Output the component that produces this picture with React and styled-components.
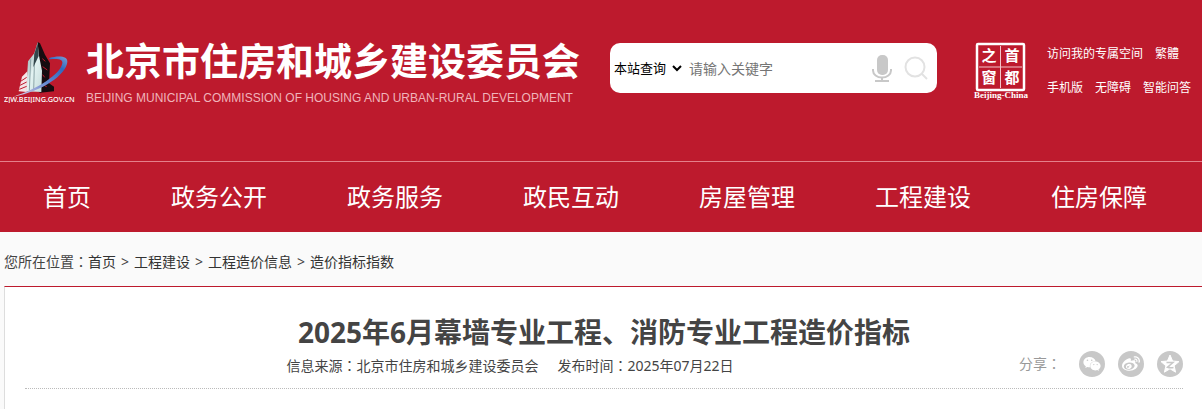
import React from "react";
import styled, { createGlobalStyle } from "styled-components";
import { FaWeibo, FaWeixin } from "react-icons/fa";

const navItems = ["首页", "政务公开", "政务服务", "政民互动", "房屋管理", "工程建设", "住房保障"];
const crumbs = ["首页", "工程建设", "工程造价信息", "造价指标指数"];
const quickLinks = [
  ["访问我的专属空间", "繁體"],
  ["手机版", "无障碍", "智能问答"],
];

const BuildingLogo = () => (
  <svg width="72" height="63" viewBox="12 18 216 189" aria-hidden="true">
    <defs>
      <linearGradient id="face" x1="0" y1="0" x2="1" y2="1">
        <stop offset="0" stopColor="#6f8a8e" />
        <stop offset="0.5" stopColor="#e4f4f3" />
        <stop offset="1" stopColor="#c3dad9" />
      </linearGradient>
      <linearGradient id="ring" x1="0" y1="1" x2="1" y2="0">
        <stop offset="0" stopColor="#e6d3e6" />
        <stop offset="0.5" stopColor="#5f86cf" />
        <stop offset="0.8" stopColor="#2e69c0" />
        <stop offset="1" stopColor="#7d9fd6" />
      </linearGradient>
    </defs>
    <path d="M113 24 L120 28 L135 62 L150 88 L147 148 L162 158 L162 172 L120 176 L112 170 Z" fill="#160c10" />
    <path d="M113 24 L103 58 L84 82 L78 172 L124 174 L126 110 L116 60 Z" fill="url(#face)" />
    <path d="M104 58 L101 170 M92 76 L88 170" stroke="#8ca5a8" strokeWidth="3" fill="none" />
    <path d="M113 26 L103 60 L100 100 L116 66 Z" fill="#33474c" />
    <path d="M127 74 L136 82 M128 98 L142 108 M128 122 L134 130 M128 152 L140 158" stroke="#bd1a2d" strokeWidth="3" />
    <path d="M82 112 L66 128 L56 172 L80 174 Z" fill="#f4e4e6" />
    <path d="M62 142 L80 130 M60 154 L80 144 M58 166 L80 157" stroke="#bd1a2d" strokeWidth="3" />
    <path
      d="M148 72 C176 64 204 66 202 84 C198 122 128 172 40 188 C112 166 182 120 187 88 C189 74 172 74 148 76 Z"
      fill="url(#ring)"
    />
    <text x="12" y="203" fontSize="22" fontWeight="500" fill="#fff" fontFamily="'Noto Sans', sans-serif">
      ZJW.BEIJING.GOV.CN
    </text>
  </svg>
);

const CapitalSeal = () => (
  <svg width="56" height="60" viewBox="0 0 56 60" aria-hidden="true">
    <rect x="4" y="4" width="47" height="46" rx="1" fill="none" stroke="#fff" strokeWidth="2.500" />
    <path d="M27.500 6V48M6 27H49" stroke="#f3c4ca" strokeWidth="1" />
    <g fill="#fff" fontSize="15" fontWeight="700" textAnchor="middle" fontFamily="'Noto Sans CJK SC', sans-serif">
      <text x="16" y="21">之</text>
      <text x="39" y="21">首</text>
      <text x="16" y="43">窗</text>
      <text x="39" y="43">都</text>
    </g>
    <text
      x="28"
      y="58"
      fill="#fff"
      fontSize="9"
      fontWeight="700"
      textAnchor="middle"
      fontFamily="'Liberation Serif', serif"
    >
      Beijing-China
    </text>
  </svg>
);

const MicIcon = () => (
  <svg width="20" height="28" viewBox="0 0 20 28" aria-hidden="true">
    <rect x="5" y="1" width="11" height="20" rx="5" fill="#c8c8c8" />
    <path d="M1 15v1.500a9 7 0 0 0 18 0V15" fill="none" stroke="#c8c8c8" strokeWidth="2" />
    <path d="M10 23v4M3 27h14" stroke="#c8c8c8" strokeWidth="2" />
  </svg>
);

const SearchIcon = () => (
  <svg width="24" height="24" viewBox="0 0 24 24" fill="none" stroke="#e2e2e2" aria-hidden="true">
    <circle cx="11" cy="11" r="9.500" strokeWidth="2" />
    <path d="M18 18l5 5" strokeWidth="2" />
  </svg>
);

const QzoneIcon = () => (
  <svg width="20" height="20" viewBox="0 0 20 20" aria-hidden="true">
    <path
      d="M10 1l2.600 6 6.400.6-4.900 4.200 1.500 6.400L10 14.800l-5.600 3.400 1.500-6.400L1 7.600 7.400 7z"
      fill="#fff"
      stroke="#fff"
      strokeLinejoin="round"
    />
    <path d="M6.500 8.500h6.500l-5.500 4.700c2 .6 4 .6 6 .2" fill="none" stroke="#c8c8c8" strokeWidth="1.500" />
  </svg>
);

const App = () => {
  return (
    <>
      <GlobalStyle />
      <Header>
        <Brand href="#">
          <BuildingLogo />
          <BrandText>
            <BrandName>北京市住房和城乡建设委员会</BrandName>
            <BrandSub>BEIJING MUNICIPAL COMMISSION OF HOUSING AND URBAN-RURAL DEVELOPMENT</BrandSub>
          </BrandText>
        </Brand>
        <SearchForm onSubmit={(e) => e.preventDefault()}>
          <ScopeSelect aria-label="查询范围">
            <option>本站查询</option>
          </ScopeSelect>
          <KeywordInput type="text" aria-label="关键字" placeholder="请输入关键字" />
          <IconButton type="button" aria-label="语音输入">
            <MicIcon />
          </IconButton>
          <IconButton type="submit" aria-label="搜索">
            <SearchIcon />
          </IconButton>
        </SearchForm>
        <SealLink href="#" aria-label="首都之窗">
          <CapitalSeal />
        </SealLink>
        <QuickLinks>
          {quickLinks.map((row) => (
            <QuickRow key={row[0]}>
              {row.map((text) => (
                <a key={text} href="#">
                  {text}
                </a>
              ))}
            </QuickRow>
          ))}
        </QuickLinks>
      </Header>
      <Nav>
        {navItems.map((item) => (
          <NavLink key={item} href="#">
            {item}
          </NavLink>
        ))}
      </Nav>
      <Breadcrumb>
        <span>
          您所在位置<Colon>：</Colon>
        </span>
        {crumbs.map((crumb, i) => (
          <React.Fragment key={crumb}>
            {i > 0 && <Separator>&gt;</Separator>}
            <a href="#">{crumb}</a>
          </React.Fragment>
        ))}
      </Breadcrumb>
      <Article>
        <Title>2025年6月幕墙专业工程、消防专业工程造价指标</Title>
        <InfoBar>
          <Meta>
            <span>
              信息来源<Colon>：</Colon>北京市住房和城乡建设委员会
            </span>
            <span>
              发布时间<Colon>：</Colon>2025年07月22日
            </span>
          </Meta>
          <Share>
            <ShareLabel>
              分享<Colon>：</Colon>
            </ShareLabel>
            <ShareButton type="button" aria-label="微信">
              <FaWeixin size={18} />
            </ShareButton>
            <ShareButton type="button" aria-label="微博">
              <FaWeibo size={18} />
            </ShareButton>
            <ShareButton type="button" aria-label="QQ空间">
              <QzoneIcon />
            </ShareButton>
          </Share>
        </InfoBar>
      </Article>
    </>
  );
};

const GlobalStyle = createGlobalStyle`
  * {
    box-sizing: border-box;
  }
  body {
    margin: 0;
    background-color: #fafafa;
    color: #444;
    font-family: "Noto Sans", "Noto Sans CJK SC", sans-serif;
    font-size: 14px;
  }
  a {
    color: inherit;
    text-decoration: none;
  }
  button,
  input,
  select {
    padding: 0;
    border: 0;
    background: none;
    font-family: inherit;
  }
`;

const Header = styled.header`
  display: flex;
  align-items: flex-start;
  padding: 40px 8px 49px 4px;
  color: #fff;
  background-color: #bd1a2d;
`;

const Brand = styled.a`
  display: flex;
  gap: 10px;
  flex-shrink: 0;
  width: 606px;
`;

const BrandText = styled.div`
  white-space: nowrap;
`;

const BrandName = styled.div`
  font-size: 38px;
  font-weight: 700;
  line-height: 40px;
`;

const BrandSub = styled.div`
  padding-top: 8px;
  color: #f0b4bb;
  font-family: "Liberation Sans", Arial, sans-serif;
  font-size: 12px;
  line-height: 20px;
`;

const SearchForm = styled.form`
  display: flex;
  align-items: center;
  flex: 1;
  max-width: 327px;
  height: 50px;
  margin-top: 3px;
  padding-right: 4px;
  border-radius: 10px;
  background-color: #fff;
`;

const ScopeSelect = styled.select`
  width: 75px;
  height: 30px;
  color: #000;
  font-size: 13px;
`;

const KeywordInput = styled.input`
  flex: 1;
  min-width: 0;
  height: 40px;
  padding-left: 4px;
  font-size: 14px;
`;

const IconButton = styled.button`
  display: flex;
  align-items: center;
  justify-content: center;
  width: 34px;
  height: 40px;
`;

const SealLink = styled.a`
  display: flex;
  margin-left: 36px;
`;

const QuickLinks = styled.div`
  margin-left: 18px;
  padding-top: 4px;
  font-size: 12px;
  line-height: 20px;
  white-space: nowrap;
`;

const QuickRow = styled.div`
  display: flex;
  gap: 12px;
  margin-bottom: 14px;
`;

const Nav = styled.nav`
  display: flex;
  padding-left: 3px;
  overflow: hidden;
  border-top: 1px solid #e5808b;
  color: #fff;
  background-color: #bd1a2d;
`;

const NavLink = styled.a`
  padding: 0 40px;
  font-size: 24px;
  line-height: 70px;
  white-space: nowrap;
`;

const Breadcrumb = styled.div`
  display: flex;
  padding: 18px 4px 12px;
  line-height: 24px;
  a {
    color: #333;
  }
`;

const Separator = styled.span`
  width: 18px;
  text-align: center;
`;

/* keeps the full-width colon in the middle of its cell */
const Colon = styled.span`
  font-family: "Noto Sans CJK TC", sans-serif;
  line-height: 1;
`;

const Article = styled.main`
  margin-left: 4px;
  padding: 26px 19px 20px 20px;
  border-style: solid;
  border-width: 1px 0 0 1px;
  border-color: #bd1a2d #ddd #ddd;
  background-color: #fff;
`;

const Title = styled.h1`
  margin: 0;
  font-size: 28px;
  font-weight: 700;
  line-height: 38px;
  text-align: center;
`;

const InfoBar = styled.div`
  display: flex;
  align-items: flex-start;
  height: 38px;
  border-bottom: 1px dotted #bbb;
`;

const Meta = styled.div`
  display: flex;
  flex: 1;
  justify-content: center;
  gap: 19px;
  line-height: 30px;
`;

const Share = styled.div`
  display: flex;
  justify-content: flex-end;
  gap: 13px;
  width: 188px;
`;

const ShareLabel = styled.span`
  padding-right: 5px;
  color: #999;
  line-height: 26px;
`;

const ShareButton = styled.button`
  display: flex;
  align-items: center;
  justify-content: center;
  width: 26px;
  height: 26px;
  border-radius: 50%;
  color: #fff;
  background-color: #c8c8c8;
`;

export default App;
